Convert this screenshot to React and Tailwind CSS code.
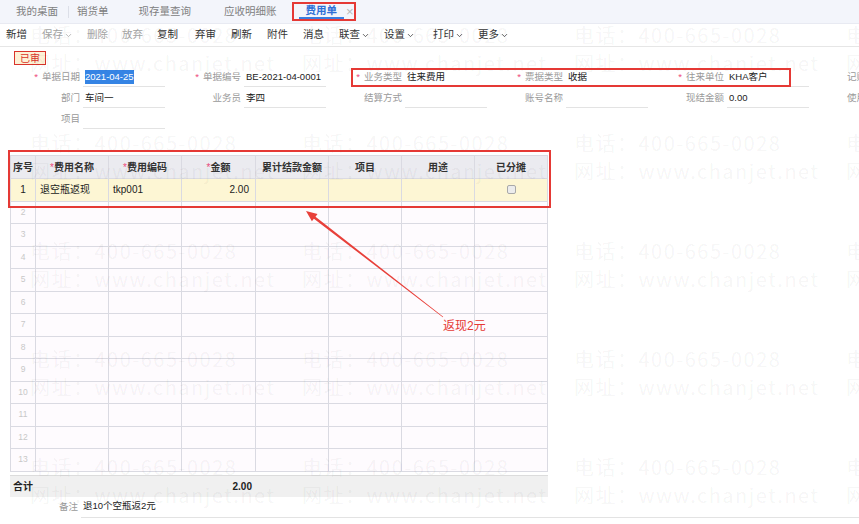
import { ChevronDown } from 'lucide-react'

const tools = [
  { t: '新增', w: 'w-[36px]' },
  { t: '保存', w: 'w-[45px]', off: true, dd: true },
  { t: '删除', w: 'w-[35px]', off: true },
  { t: '放弃', w: 'w-[35px]', off: true },
  { t: '复制', w: 'w-[38px]' },
  { t: '弃审', w: 'w-[36px]' },
  { t: '刷新', w: 'w-[36px]' },
  { t: '附件', w: 'w-[36px]' },
  { t: '消息', w: 'w-[36px]' },
  { t: '联查', w: 'w-[45px]', dd: true },
  { t: '设置', w: 'w-[49px]', dd: true },
  { t: '打印', w: 'w-[45px]', dd: true },
  { t: '更多', w: 'w-[45px]', dd: true },
]

const formRows = [
  [
    { label: '单据日期', req: true, value: <span className="bg-[#3584e4] text-white">2021-04-25</span> },
    { label: '单据编号', req: true, value: 'BE-2021-04-0001' },
    { label: '业务类型', req: true, value: '往来费用' },
    { label: '票据类型', req: true, value: '收据' },
    { label: '往来单位', req: true, value: 'KHA客户' },
    { label: '记账日期' },
  ],
  [
    { label: '部门', value: '车间一' },
    { label: '业务员', value: '李四' },
    { label: '结算方式' },
    { label: '账号名称' },
    { label: '现结金额', value: '0.00' },
    { label: '使用部门' },
  ],
  [{ label: '项目' }],
]

const cols = 'grid grid-cols-[25px_73px_73px_74px_73px_73px_73px_73px]'
const heads = [
  { t: '序号' },
  { t: '费用名称', req: true },
  { t: '费用编码', req: true },
  { t: '金额', req: true },
  { t: '累计结款金额' },
  { t: '项目' },
  { t: '用途' },
  { t: '已分摊' },
]

function Field({ f, first }) {
  return (
    <>
      <div className={`${first ? 'w-[80px]' : 'w-[76px]'} shrink-0 text-right text-[#9a9a9a] whitespace-nowrap`}>
        {f.req && <span className="text-[#ee4b7c] mr-[4px]">*</span>}
        {f.label}
      </div>
      <div className="ml-[3px] w-[82px] shrink-0 h-[19px] flex items-center pl-[2px] border-b border-[#e3e3e3] text-[#222] whitespace-nowrap">
        {f.value}
      </div>
    </>
  )
}

function Cell({ children, className = '' }) {
  return <div className={`border-r border-b border-[#dadae2] flex items-center ${className}`}>{children}</div>
}

export default function App() {
  const rows = Array.from({ length: 12 }, (_, i) => i + 2)
  const marks = Array.from({ length: 20 })

  return (
    <div className="relative w-[859px] h-[524px] overflow-hidden bg-white text-[10px] font-['Liberation_Sans','Noto_Sans_CJK_SC',sans-serif]">
      {/* tabs */}
      <div className="h-[24px] flex items-center bg-[#f3f5fb] border-b border-[#e8eaf2] text-[10.5px] text-[#808080] whitespace-nowrap">
        <span className="ml-[16px]">我的桌面</span>
        <span className="ml-[10px] w-px h-[12px] bg-[#dcdfe8]" />
        <span className="ml-[8px]">销货单</span>
        <span className="ml-[30px]">现存量查询</span>
        <span className="ml-[33px]">应收明细账</span>
        <div className="ml-[15px] h-[19px] w-[64px] border-2 border-[#e53935] flex items-stretch pl-[5px]">
          <span className="px-[7px] flex items-center border-b-2 border-[#3b7de0] text-[#2f6fd6] font-bold">费用单</span>
          <span className="ml-[2px] flex items-center text-[#b8b8b8] text-[13px] leading-none">×</span>
        </div>
      </div>

      {/* toolbar */}
      <div className="h-[23px] flex items-center pl-[6px] border-b border-[#e6e6e6] text-[10.5px] whitespace-nowrap">
        {tools.map((b) => (
          <div key={b.t} className={`${b.w} shrink-0 flex items-center ${b.off ? 'text-[#a3a3a3]' : 'text-[#333]'}`}>
            {b.t}
            {b.dd && <ChevronDown size={9} strokeWidth={2} className="ml-[1px]" />}
          </div>
        ))}
      </div>

      {/* status */}
      <div className="pt-[4px] pl-[14px]">
        <div className="w-[32px] h-[14px] border-[1.5px] border-[#d9342b] bg-[#fdf1d6] text-[#d9342b] flex items-center justify-center text-[10px]">
          已审
        </div>
      </div>

      {/* form */}
      <div className="mt-[2px] text-[9.5px]">
        {formRows.map((r, ri) => (
          <div key={ri} className="h-[21px] flex items-center">
            {r.map((f, i) => (
              <Field key={f.label} f={f} first={i === 0} />
            ))}
          </div>
        ))}
      </div>

      {/* grid */}
      <div className="mt-[25px] ml-[10px] w-[538px] border-l border-t border-[#dadae2]">
        <div className={`${cols} h-[23px] bg-[#ebebf0] font-bold text-[#333]`}>
          {heads.map((h) => (
            <Cell key={h.t} className="justify-center">
              {h.req && <span className="text-[#ee4b7c] font-normal">*</span>}
              {h.t}
            </Cell>
          ))}
        </div>
        <div className={`${cols} h-[22.5px] bg-[#fdf6d4] text-[#222]`}>
          <Cell className="justify-center">1</Cell>
          <Cell className="pl-[4px]">退空瓶返现</Cell>
          <Cell className="pl-[4px]">tkp001</Cell>
          <Cell className="justify-end pr-[6px]">2.00</Cell>
          <Cell />
          <Cell />
          <Cell />
          <Cell className="justify-center">
            <span className="w-[9px] h-[9px] rounded-[2px] border border-[#a9a9a9] bg-[#ececec]" />
          </Cell>
        </div>
        {rows.map((n) => (
          <div key={n} className={`${cols} h-[22.5px] bg-[#fefbfe]`}>
            <Cell className="justify-center text-[8.5px] text-[#c8c8c8]">{n}</Cell>
            <Cell />
            <Cell />
            <Cell />
            <Cell />
            <Cell />
            <Cell />
            <Cell />
          </div>
        ))}
      </div>

      {/* total */}
      <div className={`${cols} mt-[3px] ml-[10px] w-[538px] h-[22px] bg-[#f0f0f0] border-t border-[#dcdcdc] font-bold text-[#222]`}>
        <div className="col-span-3 flex items-center pl-[3px]">合计</div>
        <div className="flex items-center justify-end pr-[3px]">2.00</div>
      </div>

      {/* remark */}
      <div className="h-[21px] flex items-center text-[9.5px]">
        <div className="w-[78px] text-right text-[#9a9a9a]">备注</div>
        <div className="ml-[3px] flex-1 h-full flex items-center pl-[2px] border-b border-[#e3e3e3] text-[#222]">退10个空瓶返2元</div>
      </div>

      {/* watermark */}
      <div className="absolute inset-0 pointer-events-none pl-[30px] pt-[21px] grid grid-cols-[repeat(4,272px)] auto-rows-[108px] text-[20px] leading-[28px] tracking-[1.5px] text-black/[0.05] whitespace-nowrap font-['Noto_Sans_CJK_SC',sans-serif]">
        {marks.map((_, i) => (
          <div key={i}>
            <div>电话：400-665-0028</div>
            <div>网址：www.chanjet.net</div>
          </div>
        ))}
      </div>

      {/* annotations */}
      <div className="absolute left-[351px] top-[68px] w-[440px] h-[19px] border-2 border-[#e53935] pointer-events-none" />
      <div className="absolute left-[8px] top-[150px] w-[543px] h-[58px] border-2 border-[#e53935] pointer-events-none" />
      <svg className="absolute inset-0 pointer-events-none" width="859" height="524">
        <polygon points="306,211 317.5,214.1 315.5,216.7 443.2,316.8 442.8,317.2 313.9,218.7 311.9,221.3" fill="#e8403a" />
      </svg>
      <div className="absolute left-[443px] top-[317px] text-[12px] text-[#e53935] pointer-events-none">返现2元</div>
    </div>
  )
}
